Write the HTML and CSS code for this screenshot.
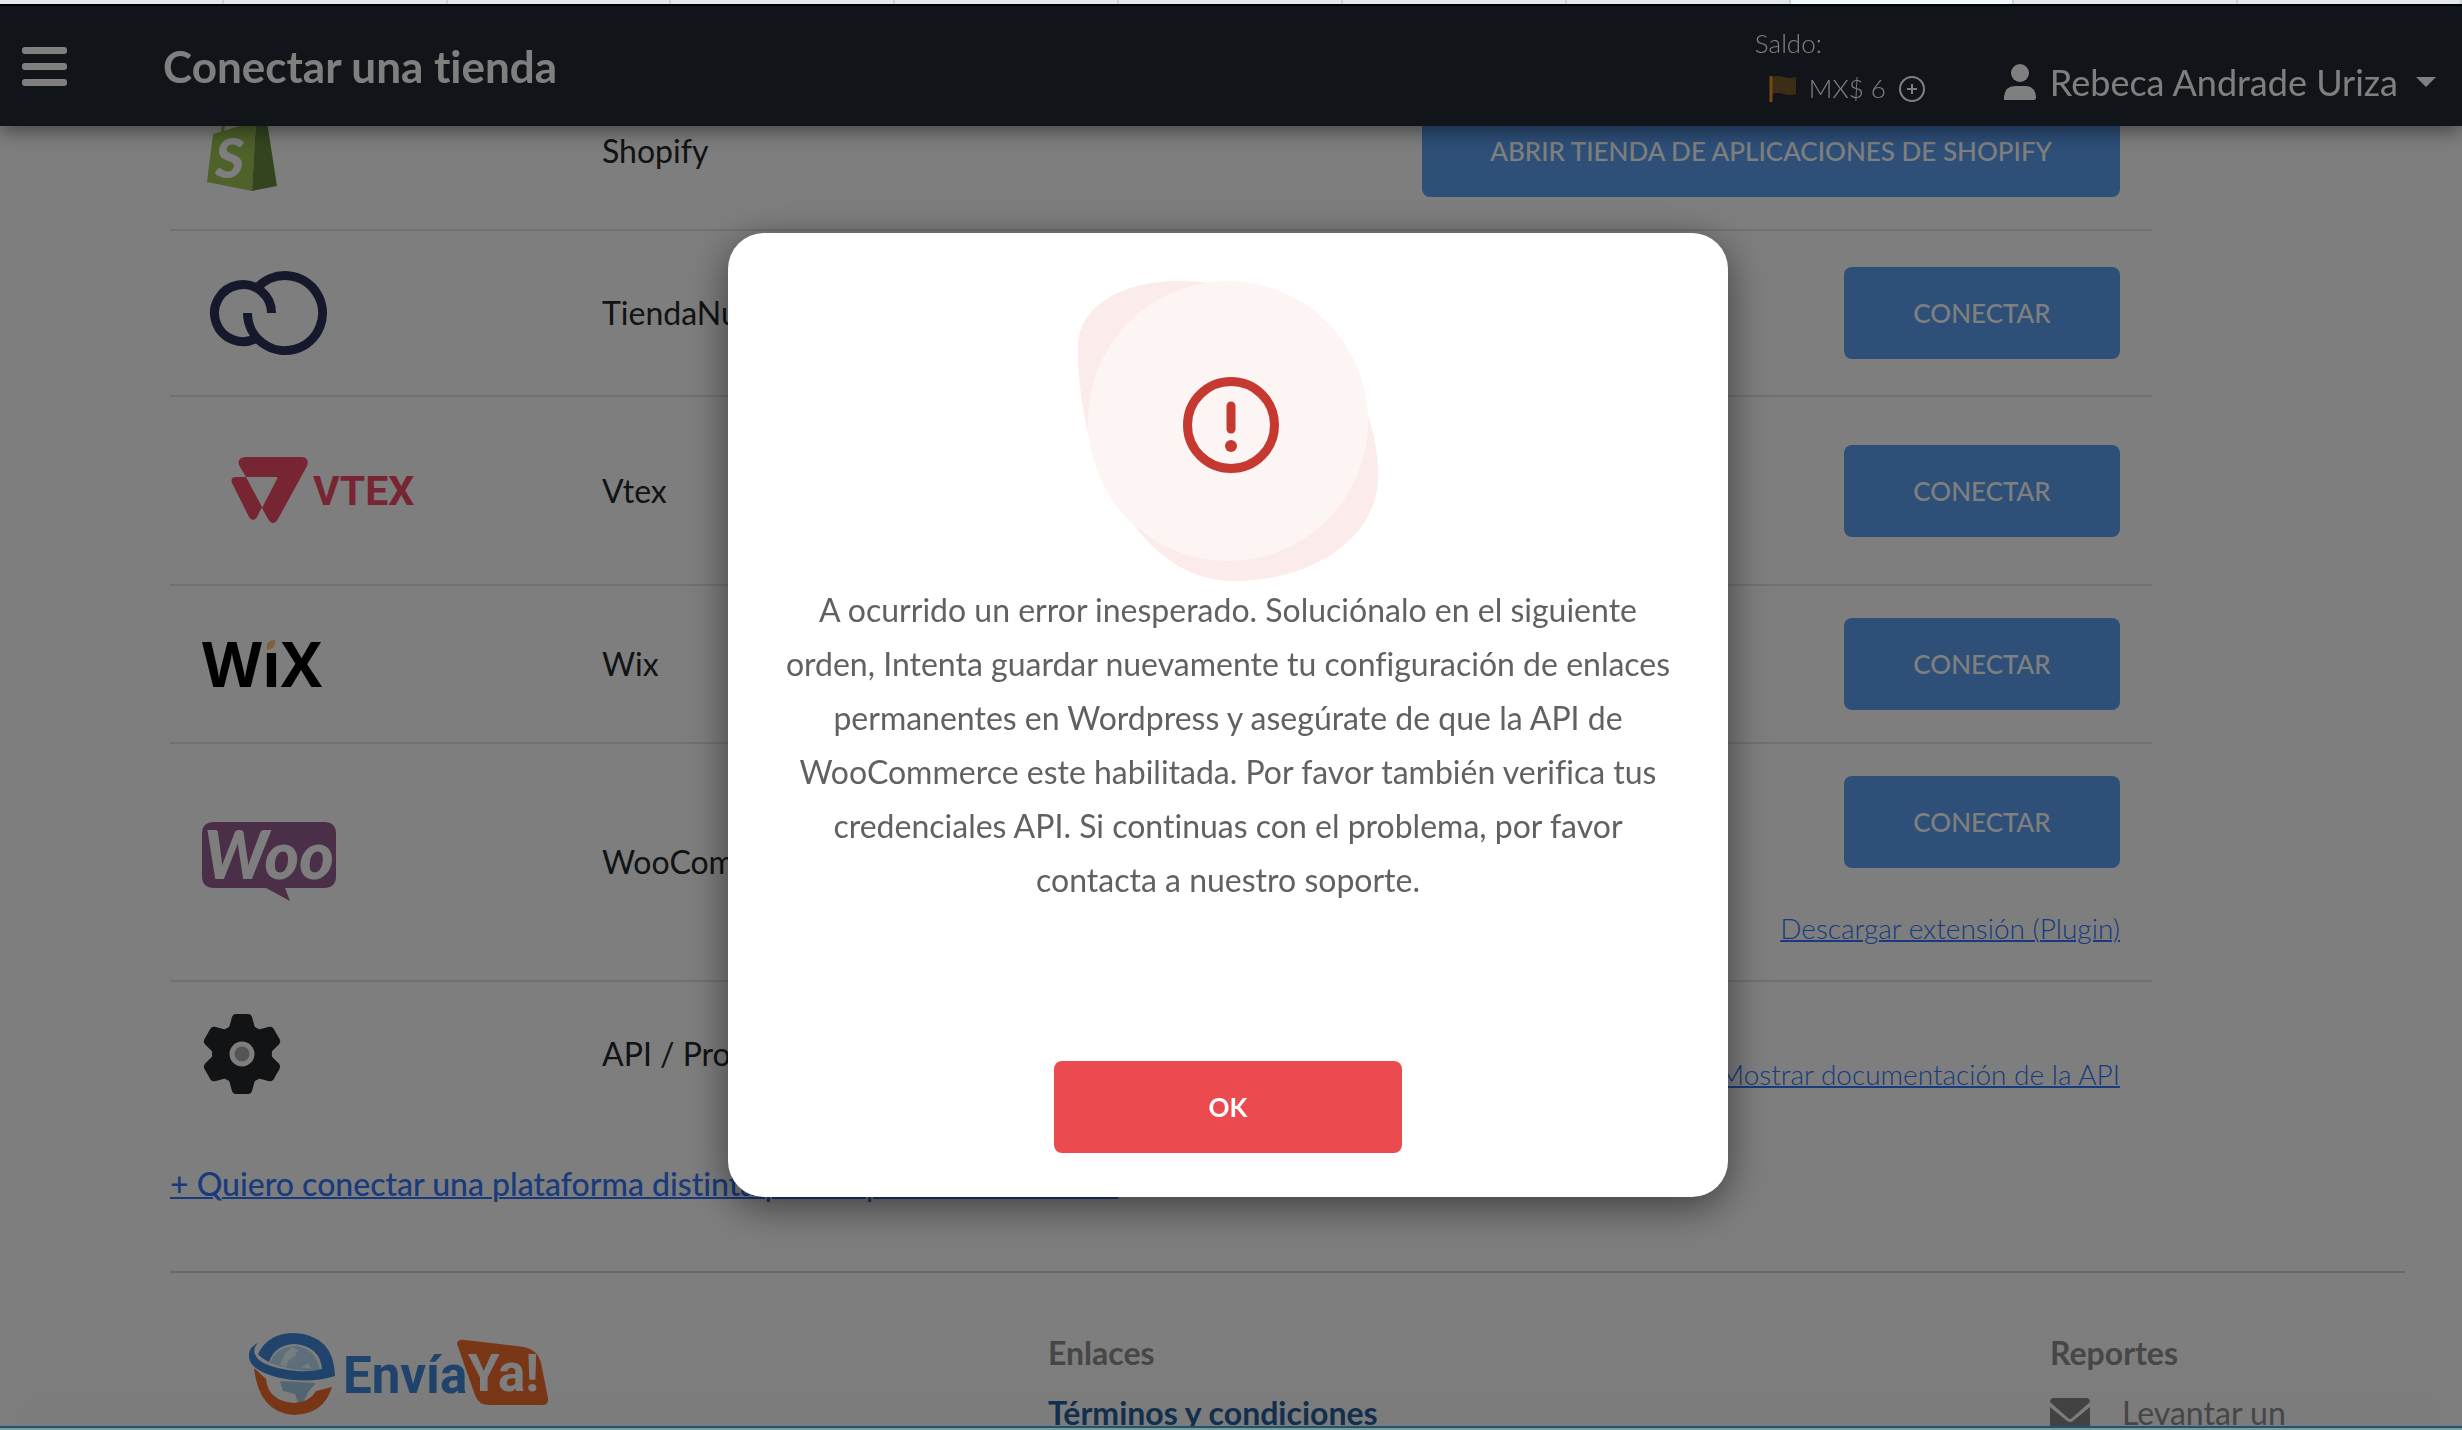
FILE: index.html
```
<!DOCTYPE html>
<html lang="es">
<head>
    <meta charset="UTF-8">
    <meta name="viewport" content="width=device-width, initial-scale=1.0">
    <title>Conectar una tienda</title>
    <link rel="stylesheet" href="styles.css">
</head>
<body>
    <div class="tab-strip"><span></span><span></span><span></span><span></span><span></span><span></span><span></span><span></span><span class="active"></span><span></span><span></span></div>

    <header class="navbar">
        <button class="menu-toggle" aria-label="Menú"><span></span><span></span><span></span></button>
        <h1>Conectar una tienda</h1>
        <div class="balance">
            <div>Saldo:</div>
            <div class="balance-row">
                <svg width="28" height="28" viewBox="0 0 28 28">
                    <path d="M3 2Q9 0 15 2T27 2V19Q21 21 15 19T3 19Z" fill="#7a5a2c"/>
                    <path d="M2 1V27" stroke="#f09028" stroke-width="3"/>
                </svg>
                <span>MX$ 6</span>
                <svg width="28" height="28" viewBox="0 0 28 28" fill="none" stroke="#fff" stroke-width="2">
                    <circle cx="14" cy="14" r="12"/>
                    <path d="M14 9V19M9 14H19"/>
                </svg>
            </div>
        </div>
        <button class="user-menu">
            <svg width="32" height="38" viewBox="0 0 32 38" fill="#fff">
                <circle cx="16" cy="10" r="9"/>
                <path d="M0 37V34Q1 23 11 23H21Q31 23 32 34Q32 37 30 37Z"/>
            </svg>
            <span>Rebeca Andrade Uriza</span>
            <span class="caret"></span>
        </button>
    </header>

    <main>
        <table class="stores">
            <tr>
                <td class="logo">
                    <svg width="130" height="92" viewBox="0 0 130 92">
                        <path d="M20 28Q24 6 34 8Q40 10 42 26" fill="none" stroke="#9cc452" stroke-width="3"/>
                        <path d="M11 29L54 16L50 86L5 77Z" fill="#9cc452"/>
                        <path d="M54 16L65 17L75 81L50 86Z" fill="#668a3e"/>
                        <text x="13" y="73" class="shopify-s">S</text>
                    </svg>
                </td>
                <td>Shopify</td>
                <td class="actions"><button class="btn">ABRIR TIENDA DE APLICACIONES DE SHOPIFY</button></td>
            </tr>
            <tr>
                <td class="logo">
                    <svg width="130" height="100" viewBox="0 0 130 100" fill="none" stroke="#2d3156" stroke-width="9">
                        <path d="M69.500 50A28.500 28.500 0 1 0 55 74.900"/>
                        <path d="M45.500 50A37.500 37.500 0 1 0 55 25.100"/>
                    </svg>
                </td>
                <td>TiendaNube</td>
                <td class="actions"><button class="btn">CONECTAR</button></td>
            </tr>
            <tr>
                <td class="logo">
                    <svg width="225" height="123" viewBox="0 0 225 123" fill="#f04a66">
                        <path d="M43 28H100Q108 29 105 37L76 90Q71 98 66 90L60 79L75 50Q76 48 74 48H44L37 36Q35 29 43 28Z"/>
                        <path d="M34 48H44L60 78L55 88Q51 94 47 88L30 54Q28 48 34 48Z"/>
                        <text x="111" y="76" class="vtex-name">VTEX</text>
                    </svg>
                </td>
                <td>Vtex</td>
                <td class="actions"><button class="btn">CONECTAR</button></td>
            </tr>
            <tr>
                <td class="logo">
                    <svg width="130" height="92" viewBox="0 0 130 92">
                        <text x="0" y="69" class="wix-name">WıX</text>
                        <path d="M65 32Q63 22 73 22Q75 30 65 32Z" fill="#fbc27a"/>
                    </svg>
                </td>
                <td>Wix</td>
                <td class="actions"><button class="btn">CONECTAR</button></td>
            </tr>
            <tr>
                <td class="logo">
                    <svg width="136" height="90" viewBox="0 0 136 90">
                        <path d="M12 5H122Q134 5 134 17V59Q134 71 122 71H83L88 84L64 71H12Q0 71 0 59V17Q0 5 12 5Z" fill="#965f90"/>
                        <text x="2" y="62" class="woo-name">Woo</text>
                    </svg>
                </td>
                <td>WooCommerce</td>
                <td class="actions">
                    <button class="btn">CONECTAR</button>
                    <a href="#" class="extra-link">Descargar extensión (Plugin)</a>
                </td>
            </tr>
            <tr>
                <td class="logo">
                    <svg width="80" height="80" viewBox="-40 -40 80 80">
                        <g fill="#22262a">
                            <circle r="30"/>
                            <path id="tooth" d="M-13 -26L-10 -37Q-9 -40 -6 -40H6Q9 -40 10 -37L13 -26Z"/>
                            <use href="#tooth" transform="rotate(60)"/>
                            <use href="#tooth" transform="rotate(120)"/>
                            <use href="#tooth" transform="rotate(180)"/>
                            <use href="#tooth" transform="rotate(240)"/>
                            <use href="#tooth" transform="rotate(300)"/>
                        </g>
                        <circle r="10" fill="#aaa" stroke="#fcfcfc" stroke-width="5"/>
                    </svg>
                </td>
                <td>API / Programación</td>
                <td class="actions"><a href="#" class="extra-link">Mostrar documentación de la API</a></td>
            </tr>
        </table>
        <a href="#" class="other-platform">+ Quiero conectar una plataforma distinta para la plataforma en uso</a>
    </main>

    <footer>
        <div class="brand">
            <svg width="300" height="84" viewBox="0 0 300 84">
                <circle cx="45" cy="41" r="28" fill="#fff"/>
                <path d="M21 30Q26 15 45 13Q66 14 71 37Q48 40 21 30Z" fill="#b8def4"/>
                <path d="M36 20L43 14L49 17L46 23L40 27L37 34L31 32ZM52 34L60 30L62 36Z" fill="#eef8ff"/>
                <path d="M31 48L67 50L60 58L54 69L49 70L46 61L34 58Z" fill="#a9cde4"/>
                <path d="M5 35Q16 45 17 46Q19 68 45 70Q61 69 67 58L83 54Q75 81 45 82Q10 80 5 35Z" fill="#f46e30"/>
                <path d="M9 21Q19 0 45 0Q85 2 86 43Q60 51 31 45Q-6 36 1 17Q4 12 9 10Q2 17 8 25Q17 35 48 38Q62 39 73 36Q71 13 45 11Q26 12 20 29Q12 25 9 21Z" fill="#4289d8"/>
                <path d="M208 11Q208 6 216 7L275 14Q289 17 292 30L299 65Q300 72 293 72H241Q229 72 226 62Z" fill="#f46e30"/>
                <text x="94" y="60" class="brand-envia">Envía</text>
                <text x="219" y="58" class="brand-ya">Ya!</text>
            </svg>
        </div>
        <div class="links">
            <h2>Enlaces</h2>
            <a href="#">Términos y condiciones</a>
        </div>
        <div class="reports">
            <h2>Reportes</h2>
            <div class="report-row">
                <svg width="40" height="30" viewBox="0 0 40 30" fill="#868686">
                    <path d="M0 4Q0 0 4 0H36Q40 0 40 4L22 20Q20 22 18 20Z"/>
                    <path d="M0 9L17 23Q20 25 23 23L40 9V30H0Z"/>
                </svg>
                <span>Levantar un</span>
            </div>
        </div>
    </footer>

    <div class="overlay">
        <div class="modal" role="dialog" aria-modal="true">
            <svg width="300" height="300" viewBox="0 0 300 300">
                <path d="M100 0C45 0 0 25 0 65C0 140 18 195 58 247C85 280 115 300 157 300C230 300 300 260 300 195C300 150 285 115 265 85C225 25 170 0 100 0Z" fill="#fcebeb"/>
                <circle cx="150" cy="140" r="140" fill="#fdf5f4"/>
                <g fill="none" stroke="#c63931" stroke-width="9" stroke-linecap="round">
                    <circle cx="153" cy="144" r="43.500"/>
                    <path d="M153 125V148"/>
                </g>
                <circle cx="153" cy="165" r="6" fill="#c63931"/>
            </svg>
            <p>A ocurrido un error inesperado. Soluciónalo en el siguiente orden, Intenta guardar nuevamente tu configuración de enlaces permanentes en Wordpress y asegúrate de que la API de WooCommerce este habilitada. Por favor también verifica tus credenciales API. Si continuas con el problema, por favor contacta a nuestro soporte.</p>
            <button class="btn btn-danger">OK</button>
        </div>
    </div>
    <div class="bottom-edge"></div>
</body>
</html>
```

FILE: styles.css
```
* {
    box-sizing: border-box;
}
body {
    margin: 0;
    padding-top: 73px;
    height: 100vh;
    overflow: hidden;
    background-color: #fcfcfc;
    font-family: Lato, "Open Sans", sans-serif;
    font-size: 32px;
    line-height: 40px;
    color: #22262a;
    font-variant-ligatures: none;
}
button {
    font-family: inherit;
    border: 0;
    cursor: pointer;
}
a {
    color: #3276fa;
    text-decoration-thickness: 2px;
}
svg {
    display: block;
}

/* window edges */
.tab-strip {
    position: fixed;
    top: 0;
    left: 0;
    right: 0;
    z-index: 20;
    display: flex;
    height: 6px;
    background-color: #e3e8e8;
    border-bottom: 2px solid #000;
}
.tab-strip span {
    flex: 1;
    border-right: 2px solid #cbd2d2;
}
.tab-strip .active {
    background-color: #eef8fa;
}
.bottom-edge {
    position: fixed;
    left: 0;
    right: 0;
    bottom: 0;
    z-index: 20;
    height: 4px;
    background-color: #7b9ba2;
    border-top: 2px solid #1f566b;
    box-shadow: 0 -12px 60px rgba(0, 0, 0, 0.25);
}

/* header */
.navbar {
    position: fixed;
    top: 6px;
    left: 0;
    right: 0;
    z-index: 5;
    display: flex;
    align-items: center;
    height: 120px;
    padding: 0 26px 0 22px;
    background-color: #222a32;
    color: #fff;
    box-shadow: 0 4px 20px rgba(0, 0, 0, 0.5);
}
.menu-toggle {
    display: flex;
    flex-direction: column;
    gap: 9px;
    width: 45px;
    padding: 0;
    background: none;
}
.menu-toggle span {
    height: 7px;
    border-radius: 3px;
    background-color: #fff;
}
.navbar h1 {
    flex: 1;
    margin: 0 0 0 96px;
    font-size: 44px;
    line-height: 56px;
}
.balance {
    margin-right: 78px;
    font-size: 26px;
    font-weight: 300;
    line-height: 45px;
}
.balance-row {
    display: flex;
    align-items: center;
    gap: 12px;
    padding-left: 14px;
}
.user-menu {
    display: flex;
    align-items: center;
    gap: 14px;
    padding: 32px 0 0;
    background: none;
    color: #fff;
    font-size: 36px;
    line-height: 44px;
}
.caret {
    margin-left: 4px;
    border: 10px solid transparent;
    border-top-color: #fff;
    border-bottom: 0;
}

/* store list */
main {
    padding: 0 57px 0 170px;
}
.stores {
    width: calc(100% - 253px);
    border-collapse: collapse;
}
.stores td {
    padding: 32px;
    border-bottom: 2px solid #e2e2e2;
}
.stores tr:last-child td {
    border-bottom: 0;
}
.stores .logo {
    width: 400px;
}
.stores .actions {
    text-align: right;
}
.btn {
    min-width: 276px;
    height: 92px;
    padding: 0 68px;
    border-radius: 8px;
    background-color: #5a9ef0;
    color: #fff;
    font-size: 26px;
    font-weight: 500;
    vertical-align: top;
}
.extra-link {
    display: block;
    margin-top: 40px;
    font-size: 28px;
    font-weight: 300;
}
.other-platform {
    display: inline-block;
    margin-top: 38px;
    font-weight: 500;
}

/* footer */
footer {
    display: grid;
    grid-template-columns: 878fr 1002fr 355fr;
    margin: 67px 57px 0 170px;
    padding-top: 60px;
    border-top: 2px solid #d2d2d2;
    color: #8e8e8e;
}
.brand {
    padding-left: 79px;
}
footer h2 {
    margin: 0 0 20px;
    font-size: 32px;
    line-height: 40px;
}
.links a {
    color: #28609e;
    font-weight: bold;
    text-decoration: none;
}
.report-row {
    display: flex;
    align-items: center;
    gap: 32px;
}

/* logo lettering */
.shopify-s {
    font: italic 900 56px Lato, sans-serif;
    fill: #fcfcfc;
}
.vtex-name {
    font: bold 41px Roboto, sans-serif;
}
.wix-name {
    font: bold 62px "Open Sans", sans-serif;
    fill: #000;
}
.woo-name {
    font: italic 900 66px Lato, sans-serif;
    fill: #fcfcfc;
}
.brand-envia {
    font: bold 51px "Liberation Sans Narrow", Roboto, sans-serif;
    fill: #4289d8;
}
.brand-ya {
    font: bold 51px "Liberation Sans Narrow", Roboto, sans-serif;
    fill: #fff;
}

/* error dialog */
.overlay {
    position: fixed;
    inset: 0;
    z-index: 10;
    display: flex;
    align-items: center;
    justify-content: center;
    padding-right: 6px;
    background-color: rgba(0, 0, 0, 0.5);
}
.modal {
    display: flex;
    flex-direction: column;
    align-items: center;
    width: 1000px;
    padding: 48px 50px 44px;
    border-radius: 36px;
    background-color: #fff;
    color: #616161;
    text-align: center;
    box-shadow: 0 10px 40px rgba(0, 0, 0, 0.5);
}
.modal p {
    margin: 2px 0 154px;
    line-height: 54px;
}
.btn-danger {
    width: 348px;
    background-color: #eb4a4e;
    font-weight: bold;
}
```
